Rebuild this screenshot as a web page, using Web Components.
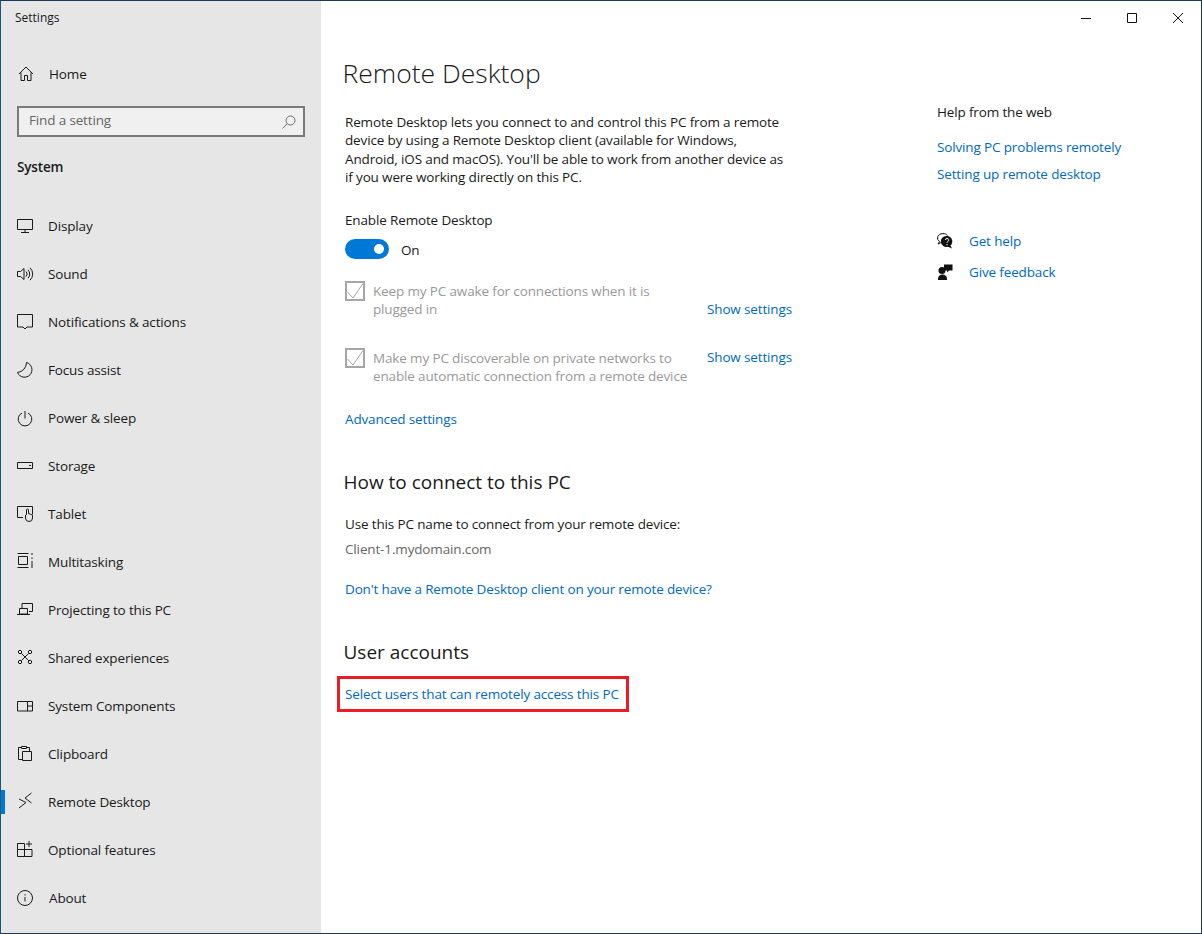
<!DOCTYPE html>
<html lang="en">

<head>
    <meta charset="UTF-8">
    <title>Settings</title>
    <style>
        body {
            margin: 0;
            font-family: "Open Sans", "Noto Sans", sans-serif;
            font-size: 13.5px;
            letter-spacing: -0.147px;
            color: #1a1a1a;
        }
    </style>
</head>

<body>
    <settings-app></settings-app>

    <script>
        const ICONS = {
            home: '<path d="M2 8 9 1l7 7M4 6.500v8h3.500v-5h3v5H14v-8"/>',
            display: '<path d="M.5 1.500h15v10H.5zM8 11.500v3M4 14.500h8"/>',
            sound: '<path d="M.5 5.500h3L7 2.500v11l-3.500-3H.5zM9 5.500a3.500 3.500 0 0 1 0 5M11 3.800a6 6 0 0 1 0 8.400M13 1.800a8.500 8.500 0 0 1 0 12.400"/>',
            notifications: '<path d="M.5 .5h15v12.500H10L8 15l-2-2H.5z"/>',
            focus: '<path d="M9.500 .5A7.500 7.500 0 1 1 .5 10.500 10 10 0 0 0 9.500 .5z"/>',
            power: '<path d="M8 1v7.500M5 3a6.800 6.800 0 1 0 6 0"/>',
            storage: '<path d="M.5 4.500h15v6H.5zM12 7.500h2"/>',
            tablet: '<path d="M6 11.500H.5V.5h15v8M9.500 9V4a1 1 0 0 1 2 0v3.500l3 1a1.500 1.500 0 0 1 1 1.500v2a3.500 3.500 0 0 1-7 0V9"/>',
            multitasking: '<path d="M.5 -.5h11M.5 13.500h11M1.500 2.500h9v8h-9zM15 -1v2M15 3.500v1.500M15 7v7"/>',
            projecting: '<path d="M5 7V1.500h10.500v8H12M2.500 6.500h8v5.500h-8zM0 12.500h13"/>',
            shared: '<circle cx="3" cy="2" r="1.700"/><circle cx="13" cy="2" r="1.700"/><circle cx="3" cy="12" r="1.700"/><circle cx="13" cy="12" r="1.700"/><path d="M4.200 3.200l7.600 7.600M11.800 3.200l-7.600 7.600"/>',
            components: '<path d="M.5 3.500h15v9.500H.5zM10.500 3.500v9.500M10.500 8h5"/>',
            clipboard: '<path d="M5 13.500H1.500v-12h3M9.500 1.500h3V5M4.500 2.500v-2h5v2zM5.500 5.500h9v9h-9z"/>',
            remote: '<path d="M2 5l7 3.500L2 14M14.500 -1L8 4l6.500 5"/>',
            optional: '<path d="M.5 1.500h7v6h-7zM.5 7.500h7v7h-7zM7.500 7.500H15v7H7.500zM12 -1v6M9 2h6"/>',
            about: '<circle cx="8" cy="8" r="7.500"/><path d="M8 7v4.500M8 4.200v1.300"/>'
        };

        class NavItem extends HTMLElement {
            constructor() {
                super();
                this.attachShadow({ mode: 'open' });
                this.shadowRoot.innerHTML = `
            <style>
                :host {
                    display: flex;
                    align-items: center;
                    height: 48px;
                    padding-left: 16px;
                    position: relative;
                }
                :host([selected])::before {
                    content: "";
                    position: absolute;
                    left: 0;
                    top: 12px;
                    width: 4px;
                    height: 24px;
                    background: #0078d7;
                }
                svg {
                    width: 16px;
                    height: 16px;
                    flex: none;
                    overflow: visible;
                    fill: none;
                    stroke: #1a1a1a;
                    stroke-width: 1;
                }
                span {
                    margin-left: var(--label-gap, 15px);
                    white-space: nowrap;
                }
            </style>
            <svg viewBox="0 0 16 16">${ICONS[this.getAttribute('icon')] || ''}</svg>
            <span><slot></slot></span>
        `;
            }
        }

        class SearchBox extends HTMLElement {
            constructor() {
                super();
                this.attachShadow({ mode: 'open' });
                this.shadowRoot.innerHTML = `
            <style>
                :host {
                    display: flex;
                    align-items: center;
                    justify-content: space-between;
                    box-sizing: border-box;
                    width: 288px;
                    height: 31px;
                    margin: 8px 0 0 16px;
                    padding: 0 7px 0 10px;
                    border: 2px solid #7a7a7a;
                    background: #f0f0f0;
                    color: #666;
                }
                span {
                    padding-bottom: 3px;
                }
                svg {
                    width: 14px;
                    height: 14px;
                    fill: none;
                    stroke: #6b6b6b;
                }
            </style>
            <span>Find a setting</span>
            <svg viewBox="0 0 14 14"><circle cx="8.500" cy="5.500" r="4.500"/><path d="M5.300 8.700.5 13.500"/></svg>
        `;
            }
        }

        class SettingsSidebar extends HTMLElement {
            constructor() {
                super();
                this.attachShadow({ mode: 'open' });
                const rows = [
                    ['display', 'Display'], ['sound', 'Sound'], ['notifications', 'Notifications &amp; actions'],
                    ['focus', 'Focus assist'], ['power', 'Power &amp; sleep'], ['storage', 'Storage'],
                    ['tablet', 'Tablet'], ['multitasking', 'Multitasking'], ['projecting', 'Projecting to this PC'],
                    ['shared', 'Shared experiences'], ['components', 'System Components'], ['clipboard', 'Clipboard'],
                    ['remote', 'Remote Desktop'], ['optional', 'Optional features'], ['about', 'About']
                ];
                this.shadowRoot.innerHTML = `
            <style>
                :host {
                    display: block;
                    flex: none;
                    width: 320px;
                    background: #e6e6e6;
                }
                .title {
                    height: 34px;
                    margin-bottom: 15px;
                    padding-left: 14px;
                    font-size: 12px;
                    letter-spacing: 0;
                    line-height: 34px;
                }
                .system {
                    height: 30px;
                    padding: 15px 0 20px 16px;
                    font-weight: 600;
                    line-height: 30px;
                }
                .home {
                    --label-gap: 16px;
                }
                .about {
                    --label-gap: 16px;
                }
            </style>
            <div class="title">Settings</div>
            <nav-item class="home" icon="home">Home</nav-item>
            <search-box></search-box>
            <div class="system">System</div>
            ${rows.map(([icon, label]) => `<nav-item class="${icon}" icon="${icon}" ${icon === 'remote' ? 'selected' : ''}>${label}</nav-item>`).join('')}
        `;
            }
        }

        class WindowControls extends HTMLElement {
            constructor() {
                super();
                this.attachShadow({ mode: 'open' });
                this.shadowRoot.innerHTML = `
            <style>
                :host {
                    display: flex;
                    justify-content: flex-end;
                    height: 32px;
                }
                div {
                    display: flex;
                    align-items: center;
                    justify-content: center;
                    width: 46px;
                    height: 34px;
                }
                svg {
                    width: 10px;
                    height: 10px;
                    overflow: visible;
                    fill: none;
                    stroke: #111;
                    stroke-width: 1;
                }
            </style>
            <div><svg viewBox="0 0 10 10"><path d="M0 5.500h10"/></svg></div>
            <div><svg viewBox="0 0 10 10"><path d="M.5 .5h9v9h-9z"/></svg></div>
            <div><svg viewBox="0 0 10 10"><path d="M0 0l10 10M10 0 0 10"/></svg></div>
        `;
            }
        }

        class ToggleSwitch extends HTMLElement {
            constructor() {
                super();
                this.attachShadow({ mode: 'open' });
                this.shadowRoot.innerHTML = `
            <style>
                :host {
                    display: flex;
                    align-items: center;
                    gap: 12px;
                    height: 20px;
                }
                .track {
                    display: flex;
                    align-items: center;
                    justify-content: flex-end;
                    box-sizing: border-box;
                    width: 44px;
                    height: 20px;
                    padding-right: 5px;
                    border-radius: 10px;
                    background: #0078d7;
                }
                .knob {
                    width: 10px;
                    height: 10px;
                    border-radius: 50%;
                    background: #fff;
                }
                span {
                    padding-top: 1px;
                }
            </style>
            <div class="track"><div class="knob"></div></div>
            <span><slot></slot></span>
        `;
            }
        }

        class CheckRow extends HTMLElement {
            constructor() {
                super();
                this.attachShadow({ mode: 'open' });
                this.shadowRoot.innerHTML = `
            <style>
                :host {
                    display: grid;
                    grid-template-columns: 28px 334px auto;
                    line-height: 18px;
                    white-space: nowrap;
                }
                svg {
                    width: 20px;
                    height: 20px;
                    fill: none;
                    stroke: #a6a6a6;
                }
                .label {
                    padding-top: 1px;
                    color: #999;
                }
                .link {
                    margin: var(--link-margin, 0 0 -1px);
                    color: #0069c4;
                    line-height: 20px;
                    align-self: var(--link-align, end);
                }
            </style>
            <svg viewBox="0 0 20 20">
                <rect x="1" y="1" width="18" height="18" stroke-width="2"/>
                <path d="M2.500 11l5.500 6L18 2.500" stroke-width="1"/>
            </svg>
            <div class="label"><slot></slot></div>
            <div class="link">Show settings</div>
        `;
            }
        }

        class HelpPanel extends HTMLElement {
            constructor() {
                super();
                this.attachShadow({ mode: 'open' });
                this.shadowRoot.innerHTML = `
            <style>
                :host {
                    display: block;
                    padding-top: 69px;
                    line-height: 20px;
                    white-space: nowrap;
                }
                a {
                    display: block;
                    color: #0069c4;
                    text-decoration: none;
                }
                .one { margin-top: 15px; }
                .two { margin-top: 7px; }
                .row {
                    display: flex;
                    align-items: center;
                    gap: 16px;
                    height: 20px;
                }
                .help { margin-top: 47px; }
                .feedback { margin-top: 11px; }
                svg {
                    width: 16px;
                    height: 16px;
                    flex: none;
                    fill: #111;
                }
            </style>
            <div>Help from the web</div>
            <a class="one">Solving PC problems remotely</a>
            <a class="two">Setting up remote desktop</a>
            <div class="row help">
                <svg viewBox="0 0 16 16">
                    <path d="M6 .5a5.500 4.500 0 0 0-3.500 8L1 11l3.500-1.700" fill="none" stroke="#111"/>
                    <path d="M6 .5c2 0 3.500 .8 4.500 2" fill="none" stroke="#111"/>
                    <path d="M10 3a5.500 5.500 0 0 1 3.500 9.500l1.500 3-4-1.800A5.500 5.500 0 1 1 10 3z"/>
                    <path d="M8.500 7a1.600 1.600 0 1 1 2.200 1.500c-.5 .3-.7 .6-.7 1.200M10 11v1.300" fill="none" stroke="#fff"/>
                </svg>
                <a>Get help</a>
            </div>
            <div class="row feedback">
                <svg viewBox="0 0 16 16">
                    <path d="M7 .5h8.500v6h-3.500l-2 2V6.500H7z"/>
                    <circle cx="5" cy="6.500" r="3.500"/>
                    <path d="M1 16v-1.500a4.500 4 0 0 1 9 0V16z"/>
                </svg>
                <a>Give feedback</a>
            </div>
        `;
            }
        }

        class RemotePage extends HTMLElement {
            constructor() {
                super();
                this.attachShadow({ mode: 'open' });
                this.shadowRoot.innerHTML = `
            <style>
                :host {
                    display: block;
                    flex: none;
                    width: 616px;
                    padding-left: 24px;
                    box-sizing: border-box;
                    line-height: 20px;
                    white-space: nowrap;
                }
                h1 {
                    margin: 20px 0 1px -2.500px;
                    font-size: 26.5px;
                    font-weight: 300;
                    letter-spacing: 0;
                    line-height: 40px;
                }
                h2 {
                    margin: 39px 0 0 -1.500px;
                    font-size: 19px;
                    font-weight: 400;
                    letter-spacing: 0;
                    line-height: 28px;
                }
                p {
                    margin: 0;
                }
                a {
                    color: #0069c4;
                    text-decoration: none;
                }
                .intro {
                    margin-top: 20px;
                    line-height: 18.33px;
                }
                .enable { margin-top: 24px; }
                toggle-switch { margin-top: 9px; }
                .keep { margin-top: 22px; }
                .discover {
                    margin-top: 29.66px;
                    --link-align: start;
                    --link-margin: -1px 0 0;
                }
                .advanced { margin-top: 23.66px; }
                .use { margin-top: 18px; }
                .name {
                    margin-top: 5px;
                    color: #666;
                }
                .client { margin-top: 20px; }
                .users {
                    box-sizing: border-box;
                    width: 292px;
                    height: 36px;
                    margin: 10px 0 0 -8px;
                    padding: 5px 0 0 5px;
                    border: 3px solid #ed1c24;
                }
            </style>
            <h1>Remote Desktop</h1>
            <p class="intro">Remote Desktop lets you connect to and control this PC from a remote<br>device by using a Remote Desktop client (available for Windows,<br>Android, iOS and macOS). You'll be able to work from another device as<br>if you were working directly on this PC.</p>
            <p class="enable">Enable Remote Desktop</p>
            <toggle-switch>On</toggle-switch>
            <check-row class="keep">Keep my PC awake for connections when it is<br>plugged in</check-row>
            <check-row class="discover">Make my PC discoverable on private networks to<br>enable automatic connection from a remote device</check-row>
            <p class="advanced"><a>Advanced settings</a></p>
            <h2>How to connect to this PC</h2>
            <p class="use">Use this PC name to connect from your remote device:</p>
            <p class="name">Client-1.mydomain.com</p>
            <p class="client"><a>Don't have a Remote Desktop client on your remote device?</a></p>
            <h2>User accounts</h2>
            <div class="users"><a>Select users that can remotely access this PC</a></div>
        `;
            }
        }

        class SettingsApp extends HTMLElement {
            constructor() {
                super();
                this.attachShadow({ mode: 'open' });
                this.shadowRoot.innerHTML = `
            <style>
                :host {
                    display: flex;
                    box-sizing: border-box;
                    width: 1202px;
                    height: 934px;
                    border: 1px solid #1b3b54;
                    border-left-color: #12597f;
                    background: #fff;
                }
                .main {
                    flex: 1;
                    display: flex;
                    flex-direction: column;
                }
                .content {
                    display: flex;
                }
            </style>
            <settings-sidebar></settings-sidebar>
            <div class="main">
                <window-controls></window-controls>
                <div class="content">
                    <remote-page></remote-page>
                    <help-panel></help-panel>
                </div>
            </div>
        `;
            }
        }

        customElements.define('nav-item', NavItem);
        customElements.define('search-box', SearchBox);
        customElements.define('settings-sidebar', SettingsSidebar);
        customElements.define('window-controls', WindowControls);
        customElements.define('toggle-switch', ToggleSwitch);
        customElements.define('check-row', CheckRow);
        customElements.define('help-panel', HelpPanel);
        customElements.define('remote-page', RemotePage);
        customElements.define('settings-app', SettingsApp);

    </script>
</body>

</html>
